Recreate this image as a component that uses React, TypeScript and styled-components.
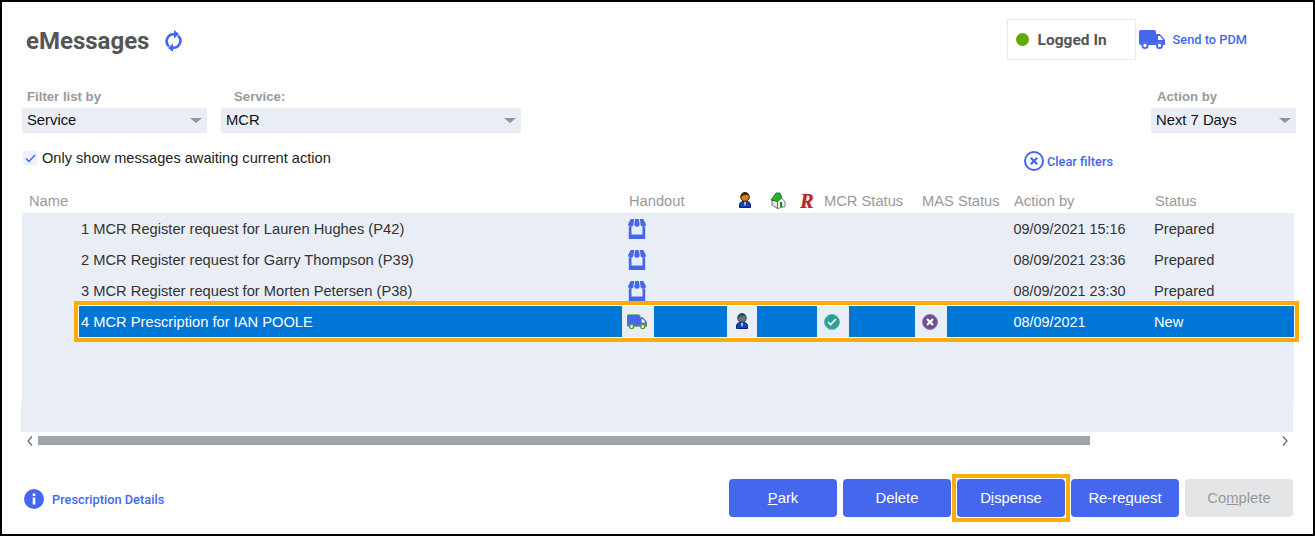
import React from 'react';
import styled, { createGlobalStyle } from 'styled-components';

const BLUE = '#4467ee';
const ORANGE = '#fbab0a';

const GlobalStyle = createGlobalStyle`
  * {
    box-sizing: border-box;
  }
  html, body {
    margin: 0;
    background: #fff;
  }
`;

const Frame = styled.div`
  width: 1315px;
  height: 536px;
  border: 2px solid #000;
  padding: 0 17px 0 20px;
  background: #fff;
  font-family: 'Liberation Sans', Arial, sans-serif;
  font-size: 14.7px;
  color: #333;
  overflow: hidden;
`;

const Header = styled.header`
  display: flex;
  justify-content: space-between;
  align-items: center;
  height: 41px;
  margin-top: 17px;
`;

const TitleGroup = styled.div`
  display: flex;
  align-items: center;
  gap: 15px;
  padding: 3px 0 0 4px;
`;

const Title = styled.h1`
  margin: 0;
  font-family: Roboto, sans-serif;
  font-size: 24px;
  font-weight: 700;
  color: #555;
`;

const HeaderRight = styled.div`
  display: flex;
  align-items: center;
  padding-right: 49px;
`;

const LoginBox = styled.div`
  display: flex;
  align-items: center;
  gap: 9px;
  width: 129px;
  height: 41px;
  padding-left: 8px;
  margin-right: 3px;
  border: 1px solid #e9e9e9;
  font-family: Roboto, sans-serif;
  font-size: 15.5px;
  font-weight: 700;
  color: #555;
`;

const Dot = styled.span`
  width: 13px;
  height: 13px;
  border-radius: 50%;
  background: #66a800;
`;

const ActionLink = styled.a<{ $gap?: number }>`
  display: flex;
  align-items: center;
  gap: ${(p) => p.$gap ?? 8}px;
  font-family: Roboto, sans-serif;
  font-size: 12.8px;
  font-weight: 500;
  color: ${BLUE};
`;

const DetailsLink = styled(ActionLink)`
  padding-top: 2px;
`;

const FilterRow = styled.div`
  display: flex;
  margin-top: 28px;
`;

const Filter = styled.div<{ $width: number; $labelIndent: number; $gap?: number }>`
  width: ${(p) => p.$width}px;
  margin-right: ${(p) => p.$gap ?? 0}px;

  label {
    display: block;
    height: 20px;
    line-height: 18px;
    padding-left: ${(p) => p.$labelIndent}px;
    font-size: 13.2px;
    font-weight: 700;
    color: #999;
  }
`;

const Select = styled.div`
  position: relative;
  height: 25px;
  line-height: 24px;
  padding-left: 5px;
  background: #e9edf6;
  font-size: 14.8px;
  color: #111;

  &::after {
    content: '';
    position: absolute;
    top: 10px;
    right: 5px;
    border-left: 6px solid transparent;
    border-right: 6px solid transparent;
    border-top: 5px solid #8f939a;
  }
`;

const OptionsRow = styled.div`
  display: flex;
  align-items: flex-start;
  justify-content: space-between;
  height: 21px;
  margin-top: 18px;
  padding: 0 183px 0 1px;
`;

const CheckLabel = styled.div`
  display: flex;
  align-items: center;
  gap: 5px;
  height: 14px;
  font-size: 14.6px;
  color: #222;
`;

const CheckBox = styled.span`
  display: flex;
  align-items: center;
  justify-content: center;
  width: 14px;
  height: 14px;
  background: #eef1fb;
`;

const HeadRow = styled.div`
  display: grid;
  grid-template-columns: 600px 109px 32px 30px 24px 98px 92px 141px 1fr;
  align-items: center;
  height: 25px;
  margin-top: 16px;
  padding-left: 7px;
  color: #999;
`;

const TableBody = styled.div`
  height: 189px;
  margin-right: 2px;
  background: #e9edf6;
`;

const TableFoot = styled.div`
  height: 30px;
  margin: 0 3px 0 -1px;
  background: #e9edf6;
`;

const Row = styled.div<{ $selected?: boolean }>`
  position: relative;
  display: grid;
  grid-template-columns: 543px 32px 73px 30px 60px 32px 66px 32px 66.5px 140.5px 1fr;
  align-items: stretch;
  height: 31px;
  margin-left: 57px;
  color: ${(p) => (p.$selected ? '#fff' : '#333')};
  background: ${(p) => (p.$selected ? '#0076d6' : 'transparent')};
  box-shadow: ${(p) => (p.$selected ? '0 0 0 1px #fff' : 'none')};
`;

const Highlight = styled.span`
  position: absolute;
  top: -5px;
  right: -5px;
  bottom: -5px;
  left: -5px;
  border: 4px solid ${ORANGE};
  pointer-events: none;
`;

const Cell = styled.div<{ $pad?: number; $size?: number }>`
  display: flex;
  align-items: center;
  padding-left: ${(p) => p.$pad ?? 0}px;
  font-size: ${(p) => p.$size ?? 14.7}px;
`;

const IconCell = styled.div<{ $light?: boolean; $nudge?: number }>`
  display: flex;
  align-items: center;
  justify-content: center;
  padding-right: ${(p) => p.$nudge ?? 0}px;
  background: ${(p) => (p.$light ? '#e9edf6' : 'transparent')};
`;

const RoundMark = styled.span<{ $color: string; $rim: string }>`
  display: flex;
  align-items: center;
  justify-content: center;
  width: 16px;
  height: 16px;
  border-radius: 50%;
  border: 1px solid ${(p) => p.$rim};
  background: ${(p) => p.$color};
`;

const RMark = styled.span`
  font-family: 'Liberation Serif', serif;
  font-size: 20px;
  font-weight: 700;
  font-style: italic;
  line-height: 16px;
  color: #b3262a;
  text-shadow: 1px 0 0 #e79a9a;
`;

const ScrollBar = styled.div`
  display: flex;
  align-items: flex-start;
  height: 16px;
  padding: 4px 0 0 5px;
`;

const Thumb = styled.div`
  flex: 0 0 1052px;
  height: 9px;
  margin: 0 192px 0 5px;
  background: #9ea5ab;
`;

const Footer = styled.footer`
  display: flex;
  justify-content: space-between;
  align-items: center;
  height: 38px;
  margin-top: 31px;
  padding: 0 3px 0 2px;
`;

const Buttons = styled.div`
  display: flex;
  gap: 6px;
`;

const Button = styled.button<{ $disabled?: boolean; $marked?: boolean }>`
  position: relative;
  width: 108px;
  height: 38px;
  padding: 0 0 1px;
  border: 0;
  border-radius: 4px;
  font-family: 'Liberation Sans', Arial, sans-serif;
  font-size: 14.8px;
  color: ${(p) => (p.$disabled ? '#999' : '#fff')};
  background: ${(p) => (p.$disabled ? '#e4e5e7' : BLUE)};
  box-shadow: ${(p) => (p.$marked ? '0 0 0 1px #fff' : 'none')};
`;

const Refresh = () => (
  <svg width="19" height="22" viewBox="0 0 19 22" fill="none">
    <path d="M10 4.2A7 7 0 0 0 5 16.4" stroke={BLUE} strokeWidth="2.6" />
    <path d="M9 17.8A7 7 0 0 0 14 5.6" stroke={BLUE} strokeWidth="2.6" />
    <path d="M10 0l5 4-5 4.4zM9 13.6L4 18l5 4z" fill={BLUE} />
  </svg>
);

const Truck = ({ w, h, outline }: { w: number; h: number; outline?: string }) => (
  <svg width={w} height={h} viewBox="0 0 26 19">
    <path
      d="M2 0h13a2 2 0 0 1 2 2v2h4l5 6v5h-2.5a3 3 0 0 0-6 0H9a3 3 0 0 0-6 0H2a2 2 0 0 1-2-2V2a2 2 0 0 1 2-2z"
      fill={BLUE}
      stroke={outline ?? 'none'}
      strokeWidth={outline ? 1 : 0}
    />
    <path d="M19 6h2l3 4h-5z" fill="#fff" />
    <circle cx="6" cy="15.5" r="2.6" fill="#fff" stroke={outline ?? BLUE} strokeWidth="1.8" />
    <circle cx="20.5" cy="15.5" r="2.6" fill="#fff" stroke={outline ?? BLUE} strokeWidth="1.8" />
  </svg>
);

const Store = () => (
  <svg width="18" height="20" viewBox="0 0 18 20">
    <path
      d="M2.800 0h3.400l-.7 5a2.700 2.700 0 0 1-5.400 0zM7.200 0h3.600l.9 5a2.700 2.700 0 0 1-5.400 0zM11.800 0h3.400l2.700 5a2.700 2.700 0 0 1-5.400 0z"
      fill={BLUE}
    />
    <path d="M.8 7.500h2.700v8h11v-8h2.700V20H.8z" fill={BLUE} />
  </svg>
);

const Person = ({ head, hair }: { head: string; hair: string }) => (
  <svg width="14" height="17" viewBox="0 0 14 17">
    <path d="M1.500 15.500v-2.500C1.500 11 3 9.500 5 9.500h4c2 0 3.500 1.500 3.500 3.500v2.500z" fill="#1542b8" stroke="#0b2470" />
    <path d="M6 9.500h2l-.4 4h-1.200z" fill="#bcd0f5" />
    <circle cx="7" cy="5" r="4.300" fill={head} stroke={hair} />
    <path d="M3 5a4 4 0 0 1 8-1.500C8 2.500 5 3 3 5z" fill={hair} />
  </svg>
);

const House = () => (
  <svg width="16" height="17" viewBox="0 0 16 17">
    <path d="M2 8v5l5.500 3.500V9z" fill="#e6e8e0" stroke="#555" strokeWidth=".8" />
    <path d="M7.500 9.500L11 6l4 3.500v5l-7.500 2z" fill="#fff" stroke="#555" strokeWidth=".8" />
    <path d="M1 8l5-7h4l2 4.500L7.500 9.500z" fill="#2cb02f" stroke="#0d6e12" strokeWidth=".8" />
    <rect x="10" y="10" width="2.200" height="5" fill="#1e8a22" />
  </svg>
);

const headColumns = ['MCR Status', 'MAS Status', 'Action by', 'Status'];

const rows = [
  { name: '1 MCR Register request for Lauren Hughes (P42)', action: '09/09/2021 15:16', status: 'Prepared' },
  { name: '2 MCR Register request for Garry Thompson (P39)', action: '08/09/2021 23:36', status: 'Prepared' },
  { name: '3 MCR Register request for Morten Petersen (P38)', action: '08/09/2021 23:30', status: 'Prepared' },
];

export default function App() {
  return (
    <Frame>
      <GlobalStyle />
      <Header>
        <TitleGroup>
          <Title>eMessages</Title>
          <Refresh />
        </TitleGroup>
        <HeaderRight>
          <LoginBox>
            <Dot />
            Logged In
          </LoginBox>
          <ActionLink>
            <Truck w={26} h={19} />
            Send to PDM
          </ActionLink>
        </HeaderRight>
      </Header>

      <FilterRow>
        <Filter $width={185} $labelIndent={5} $gap={14}>
          <label>Filter list by</label>
          <Select>Service</Select>
        </Filter>
        <Filter $width={300} $labelIndent={13} $gap={630}>
          <label>Service:</label>
          <Select>MCR</Select>
        </Filter>
        <Filter $width={145} $labelIndent={6}>
          <label>Action by</label>
          <Select>Next 7 Days</Select>
        </Filter>
      </FilterRow>

      <OptionsRow>
        <CheckLabel>
          <CheckBox>
            <svg width="11" height="9" viewBox="0 0 11 9" fill="none">
              <path d="M1 4.500l3 3 6-6.500" stroke={BLUE} strokeWidth="1.500" />
            </svg>
          </CheckBox>
          Only show messages awaiting current action
        </CheckLabel>
        <ActionLink $gap={3}>
          <svg width="20" height="20" viewBox="0 0 20 20" fill="none">
            <circle cx="10" cy="10" r="9" stroke={BLUE} strokeWidth="2" />
            <path d="M6.800 6.800l6.400 6.400M13.200 6.800l-6.400 6.400" stroke={BLUE} strokeWidth="2.200" />
          </svg>
          Clear filters
        </ActionLink>
      </OptionsRow>

      <HeadRow>
        <span>Name</span>
        <span>Handout</span>
        <Person head="#e8760f" hair="#3a2412" />
        <House />
        <RMark>R</RMark>
        {headColumns.map((c) => (
          <span key={c}>{c}</span>
        ))}
      </HeadRow>

      <TableBody>
        {rows.map((r) => (
          <Row key={r.name}>
            <Cell $pad={2}>{r.name}</Cell>
            <IconCell $nudge={2}>
              <Store />
            </IconCell>
            <span />
            <span />
            <span />
            <span />
            <span />
            <span />
            <span />
            <Cell $size={14.4}>{r.action}</Cell>
            <Cell>{r.status}</Cell>
          </Row>
        ))}
        <Row $selected>
          <Cell $pad={2}>4 MCR Prescription for IAN POOLE</Cell>
          <IconCell $light $nudge={2}>
            <Truck w={20} h={16} outline="#5aa02c" />
          </IconCell>
          <span />
          <IconCell $light>
            <Person head="#6a6f75" hair="#24506e" />
          </IconCell>
          <span />
          <IconCell $light $nudge={2}>
            <RoundMark $color="#2f9e97" $rim="#5bb6ae">
              <svg width="10" height="8" viewBox="0 0 10 8" fill="none">
                <path d="M1 4l2.500 2.500L9 1" stroke="#fff" strokeWidth="1.600" />
              </svg>
            </RoundMark>
          </IconCell>
          <span />
          <IconCell $light $nudge={2}>
            <RoundMark $color="#6f4d8f" $rim="#8c6fa8">
              <svg width="8" height="8" viewBox="0 0 8 8" fill="none">
                <path d="M1 1l6 6M7 1L1 7" stroke="#fff" strokeWidth="2.200" />
              </svg>
            </RoundMark>
          </IconCell>
          <span />
          <Cell $size={14.4}>08/09/2021</Cell>
          <Cell>New</Cell>
          <Highlight />
        </Row>
      </TableBody>
      <TableFoot />

      <ScrollBar>
        <svg width="6" height="10" viewBox="0 0 6 10" fill="none">
          <path d="M5 .5L1 5l4 4.500" stroke="#666" strokeWidth="1.200" />
        </svg>
        <Thumb />
        <svg width="6" height="10" viewBox="0 0 6 10" fill="none">
          <path d="M1 .5L5 5 1 9.500" stroke="#666" strokeWidth="1.200" />
        </svg>
      </ScrollBar>

      <Footer>
        <DetailsLink>
          <svg width="20" height="20" viewBox="0 0 20 20">
            <circle cx="10" cy="10" r="10" fill={BLUE} />
            <rect x="8.700" y="8.500" width="2.600" height="7" fill="#fff" />
            <rect x="8.700" y="4.500" width="2.600" height="2.600" fill="#fff" />
          </svg>
          Prescription Details
        </DetailsLink>
        <Buttons>
          <Button>
            <u>P</u>ark
          </Button>
          <Button>Delete</Button>
          <Button $marked>
            D<u>i</u>spense
            <Highlight />
          </Button>
          <Button>
            Re-re<u>q</u>uest
          </Button>
          <Button $disabled>
            Co<u>m</u>plete
          </Button>
        </Buttons>
      </Footer>
    </Frame>
  );
}
